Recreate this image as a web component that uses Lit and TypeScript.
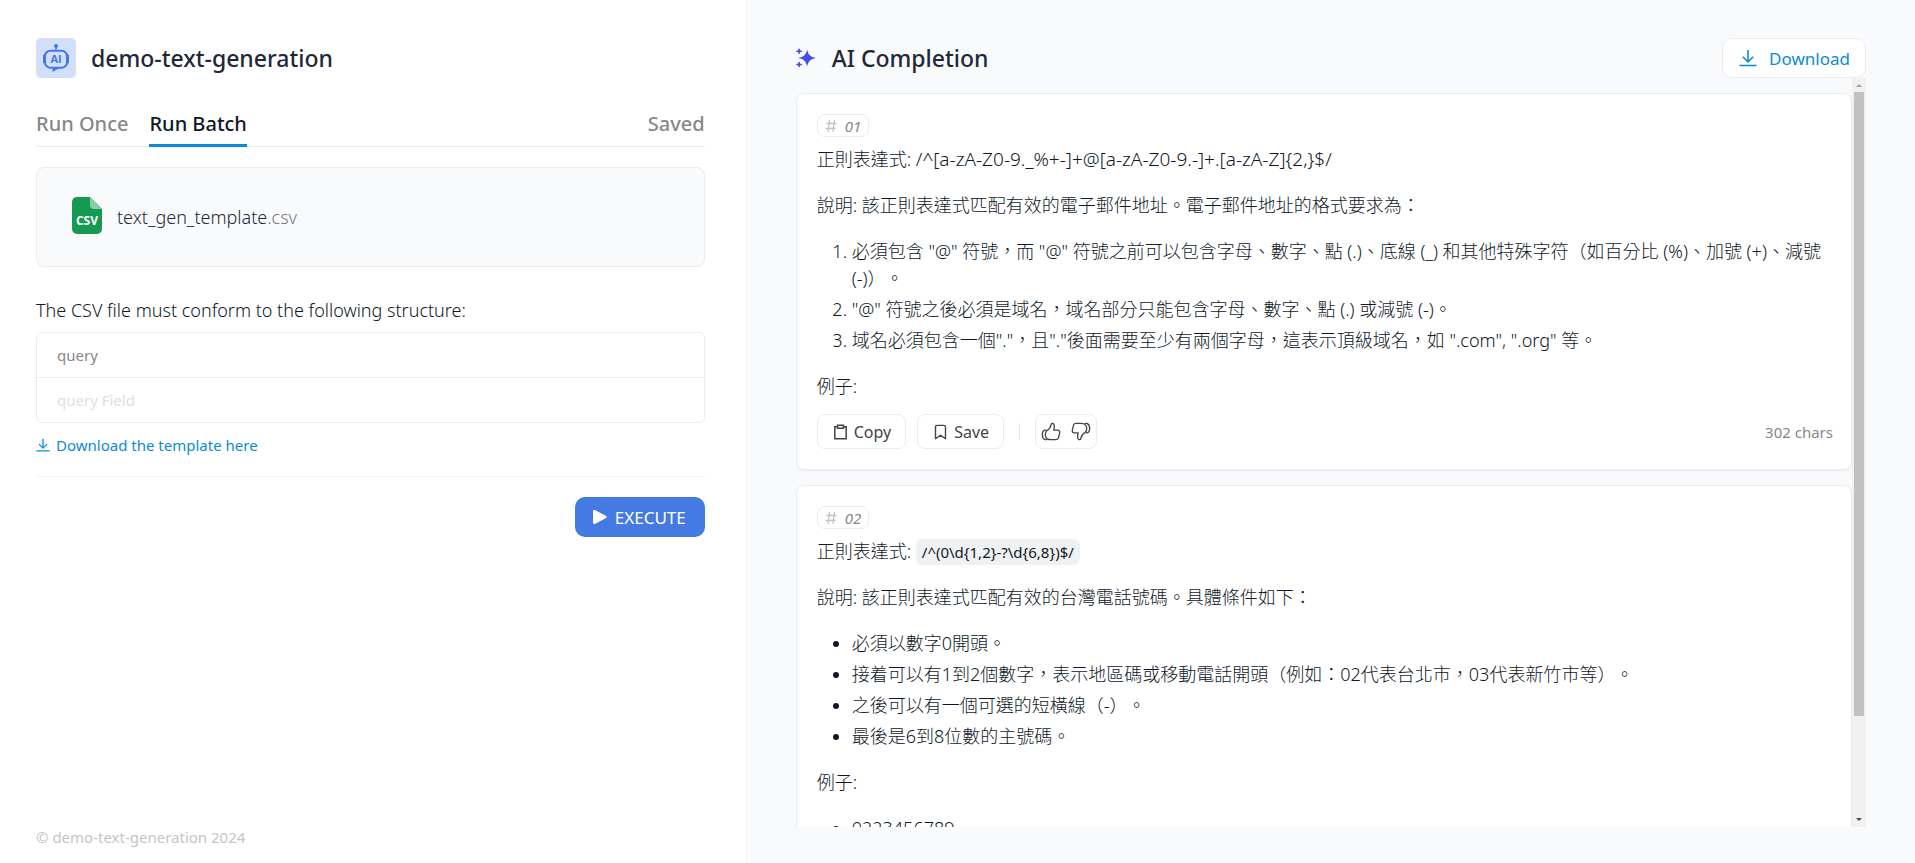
import { LitElement, html, css, svg, TemplateResult } from "lit";
import { customElement, property } from "lit/decorators.js";

const downloadIcon = html`<svg class="icon" viewBox="0 0 18 18" fill="none" stroke="currentColor" stroke-width="1.6" stroke-linejoin="round" aria-hidden="true"><path d="M9 1v11.500M3.800 7.800 9 13l5.200-5.200M.5 16.500h17"/></svg>`;

const thumb = svg`<path d="M5.300 14.500c.8.300 1.600.4 2.500.4h4.300c1.200 0 1.900-.4 2.200-1.500l1-4.300c.3-1.300-.4-2.200-1.700-2.200h-3.300c.4-1.200.6-2.500.5-3.700C10.700 1.900 10 1.100 9.100 1.100c-.6 0-.9.400-1 1.100C7.700 4.500 6.300 6.300 4.400 7.400c-1 1-1.300 2.200-1.200 3.500.1 1.500.8 2.800 2.100 3.600zM4 6.800H2.700C1.300 7.300.6 8.900.7 10.900c.1 2 .9 3.500 2.300 4h1.600"/>`;

@customElement("result-card")
class ResultCard extends LitElement {
  @property() index = "";
  @property() chars = "";

  static styles = css`
    :host {
      display: block;
      padding: 20px 18px 20px 20px;
      background: #fff;
      border: 1px solid #eaecf0;
      border-radius: 8px;
      box-shadow: 0 1px 2px rgba(16, 24, 40, 0.06);
    }
    .badge {
      display: flex;
      align-items: center;
      gap: 8px;
      box-sizing: border-box;
      width: fit-content;
      height: 23px;
      padding: 0 7px;
      border: 1px solid #eaecf0;
      border-radius: 8px;
      color: #888;
      font-size: 15px;
      font-style: italic;
      line-height: 20px;
    }
    .badge svg { width: 12px; height: 14px; color: #c4c4c4; }
    .body { margin: 9px 0 14px; }
    .actions { display: flex; align-items: center; gap: 11px; }
    button {
      display: flex;
      align-items: center;
      gap: 5px;
      box-sizing: border-box;
      height: 35px;
      padding: 0 14px;
      border: 1px solid #eaecf0;
      border-radius: 8px;
      background: #fff;
      color: #444;
      font: 400 16px "Noto Sans", sans-serif;
      cursor: pointer;
    }
    button svg { width: 17px; height: 16px; }
    .divider { width: 1px; height: 17px; margin: 0 4px; background: #e5e7eb; }
    .votes {
      display: flex;
      gap: 10px;
      align-items: center;
      box-sizing: border-box;
      height: 35px;
      padding: 0 5px;
      border: 1px solid #eaecf0;
      border-radius: 8px;
    }
    .votes button { height: 24px; padding: 0; border: 0; }
    .votes svg { width: 20px; height: 19px; }
    .flip { transform: rotate(180deg); }
    .chars { margin-left: auto; color: #888; font-size: 15px; }
  `;

  render() {
    return html`
      <div class="badge">
        <svg viewBox="0 0 12 14" fill="none" stroke="currentColor" stroke-width="1.300" aria-hidden="true"><path d="M4.500 1 3 13M9.500 1 8 13M1.500 4.500h10M.5 9.500h10"/></svg>
        <span>${this.index}</span>
      </div>
      <div class="body"><slot></slot></div>
      <div class="actions">
        <button type="button">
          <svg viewBox="0 0 16 16" fill="none" stroke="currentColor" stroke-width="1.500" aria-hidden="true"><path d="M5 2.700H2.300v12h11.400v-12H11M5 1.200h6v3H5z"/></svg>
          Copy
        </button>
        <button type="button">
          <svg viewBox="0 0 16 16" fill="none" stroke="currentColor" stroke-width="1.400" stroke-linejoin="round" aria-hidden="true"><path d="M3 14.700V3c0-1 .6-1.600 1.600-1.600h6.800c1 0 1.600.6 1.600 1.600v11.700L8 11.200z"/></svg>
          Save
        </button>
        <span class="divider"></span>
        <div class="votes">
          <button type="button" aria-label="Like"><svg viewBox="0 0 16 16" fill="none" stroke="currentColor" stroke-width="1.100" stroke-linejoin="round">${thumb}</svg></button>
          <button type="button" aria-label="Dislike"><svg class="flip" viewBox="0 0 16 16" fill="none" stroke="currentColor" stroke-width="1.100" stroke-linejoin="round">${thumb}</svg></button>
        </div>
        <span class="chars">${this.chars} chars</span>
      </div>
    `;
  }
}

@customElement("app-root")
class AppRoot extends LitElement {
  static styles = css`
    :host {
      display: grid;
      grid-template-columns: 7fr 11fr;
      height: 100vh;
      background: #f9fafc;
      color: #1d2939;
      font-family: "Noto Sans", "Noto Sans CJK TC", sans-serif;
    }
    .side {
      display: flex;
      flex-direction: column;
      box-sizing: border-box;
      min-width: 0;
      padding: 38px 40px 15px 36px;
      background: #fff;
    }
    .brand { display: flex; align-items: center; gap: 15px; }
    .logo { width: 40px; height: 40px; border-radius: 5px; background: #d1dff9; }
    .logo text { font: 700 11px "Open Sans", sans-serif; }
    h1, h2 { margin: 0; color: #1d2939; font-size: 23px; font-weight: 500; line-height: 40px; }
    .tabs {
      display: flex;
      gap: 21px;
      margin-top: 24px;
      border-bottom: 1px solid #eaecf0;
    }
    .tab {
      height: 45px;
      margin-bottom: -1px;
      padding: 0;
      border: 0;
      border-bottom: 3px solid transparent;
      background: none;
      color: #888;
      font: 500 20px "Noto Sans", sans-serif;
      cursor: pointer;
    }
    .tab.active { border-color: #0b8ad9; color: #101828; }
    .tab.last { margin-left: auto; }
    .file {
      display: flex;
      align-items: center;
      gap: 15px;
      box-sizing: border-box;
      height: 100px;
      margin-top: 20px;
      padding: 0 35px;
      border: 1px solid #eaecf0;
      border-radius: 8px;
      background: #f9fafc;
      color: #1d2939;
      font-size: 18px;
      font-weight: 300;
    }
    .file svg { width: 30px; height: 37px; margin-bottom: 4px; }
    .file text { font: 700 12px "Open Sans", sans-serif; }
    .ext { color: #777; }
    .note { margin: 30px 0 8px; color: #101828; font-size: 18px; font-weight: 300; line-height: 27px; }
    .frame { border: 1px solid #eaecf0; border-radius: 6px; }
    table { width: 100%; border-collapse: collapse; font-size: 15px; text-align: left; }
    th, td { height: 44px; padding: 0 20px; font-weight: 400; }
    th { color: #888; }
    td { border-top: 1px solid #eaecf0; color: #dedfe1; }
    .icon { width: 18px; height: 18px; }
    .template {
      display: flex;
      align-items: center;
      gap: 6px;
      align-self: flex-start;
      margin-top: 11px;
      color: #0b8ad9;
      font-size: 15px;
      line-height: 22px;
      text-decoration: none;
    }
    .template .icon { width: 14px; height: 14px; }
    .rule { height: 1px; margin: 20px 0; background: #f4f5f7; }
    .run {
      display: flex;
      align-items: center;
      align-self: flex-end;
      gap: 8px;
      height: 40px;
      padding: 0 19px 0 18px;
      border: 0;
      border-radius: 10px;
      background: #467ae3;
      color: #fff;
      font: 400 17px "Noto Sans", sans-serif;
      cursor: pointer;
    }
    .run svg { width: 14px; height: 16px; }
    footer { margin-top: auto; color: #c4c5c8; font-size: 15px; line-height: 22px; }

    .main {
      display: flex;
      flex-direction: column;
      box-sizing: border-box;
      min-width: 0;
      height: 100vh;
      padding: 38px 49px 36px 51px;
    }
    .bar { display: flex; align-items: center; gap: 16px; }
    .spark { width: 20px; height: 20px; color: #444ce7; }
    .download {
      display: flex;
      align-items: center;
      gap: 12px;
      box-sizing: border-box;
      height: 40px;
      margin-left: auto;
      padding: 0 15px 0 16px;
      border: 1px solid #eaecf0;
      border-radius: 10px;
      background: #fff;
      color: #0b8ad9;
      font: 400 17px "Noto Sans", sans-serif;
      cursor: pointer;
    }
    .pane { display: flex; flex: 1; min-height: 0; }
    .scroll {
      flex: 1;
      min-width: 0;
      box-sizing: border-box;
      padding-top: 15px;
      overflow-y: auto;
      scrollbar-width: none;
    }
    .track {
      display: flex;
      flex-direction: column;
      width: 14px;
      background: #f1f1f1;
    }
    .track svg { flex: none; width: 14px; height: 14px; }
    .grip { flex: 865; margin: 0 2px; background: #c1c1c1; }
    .rest { flex: 135; }
    result-card + result-card { margin-top: 15px; }

    .md {
      color: #101828;
      font-family: "Noto Sans", "Noto Sans CJK TC", sans-serif;
      font-size: 18px;
      font-weight: 300;
      line-height: 27px;
      text-spacing-trim: space-all;
    }
    .md p, .md ol, .md ul { margin: 0 0 19px; }
    .md > :last-child { margin-bottom: 0; }
    .md ol, .md ul { padding-left: 35px; }
    .md li + li { margin-top: 4px; }
    .latin { font-size: 19px; line-height: 1; }
    code {
      padding: 3px 6px;
      border-radius: 6px;
      background: #f0f1f3;
      font: 400 15px "Noto Sans", sans-serif;
      line-height: 1;
    }
  `;

  private first(): TemplateResult {
    return html`<div class="md" lang="zh-Hant">
      <p>正則表達式: <span class="latin">/^[a-zA-Z0-9._%+-]+@[a-zA-Z0-9.-]+.[a-zA-Z]{2,}$/</span></p>
      <p>說明: 該正則表達式匹配有效的電子郵件地址。電子郵件地址的格式要求為：</p>
      <ol>
        <li>必須包含 "@" 符號，而 "@" 符號之前可以包含字母、數字、點 (.)、底線 (_) 和其他特殊字符（如百分比 (%)、加號 (+)、減號 (-)）。</li>
        <li>"@" 符號之後必須是域名，域名部分只能包含字母、數字、點 (.) 或減號 (-)。</li>
        <li>域名必須包含一個"."，且"."後面需要至少有兩個字母，這表示頂級域名，如 ".com", ".org" 等。</li>
      </ol>
      <p>例子:</p>
    </div>`;
  }

  private second(): TemplateResult {
    return html`<div class="md" lang="zh-Hant">
      <p>正則表達式: <code>/^(0\\d{1,2}-?\\d{6,8})$/</code></p>
      <p>說明: 該正則表達式匹配有效的台灣電話號碼。具體條件如下：</p>
      <ul>
        <li>必須以數字0開頭。</li>
        <li>接着可以有1到2個數字，表示地區碼或移動電話開頭（例如：02代表台北市，03代表新竹市等）。</li>
        <li>之後可以有一個可選的短橫線（-）。</li>
        <li>最後是6到8位數的主號碼。</li>
      </ul>
      <p>例子:</p>
      <ul><li>0223456789</li></ul>
    </div>`;
  }

  render() {
    return html`
      <section class="side">
        <div class="brand">
          <svg class="logo" viewBox="0 0 40 40" fill="none" aria-hidden="true">
            <circle cx="20" cy="8" r="2" fill="#467ae3"/>
            <path d="M20 8v5" stroke="#467ae3" stroke-width="1.500"/>
            <rect x="9" y="12.700" width="22" height="17" rx="5.500" stroke="#467ae3" stroke-width="2"/>
            <path d="M8 17.500v7M32 17.500v7" stroke="#467ae3" stroke-width="2" stroke-linecap="round"/>
            <path d="M16.500 29.500h8l-8 4.500z" fill="#467ae3"/>
            <text x="20" y="25" text-anchor="middle" fill="#467ae3">AI</text>
          </svg>
          <h1>demo-text-generation</h1>
        </div>
        <nav class="tabs">
          <button class="tab" type="button">Run Once</button>
          <button class="tab active" type="button">Run Batch</button>
          <button class="tab last" type="button">Saved</button>
        </nav>
        <div class="file">
          <svg viewBox="0 0 30 37" aria-hidden="true">
            <path d="M5 0h13l12 12v20a5 5 0 0 1-5 5H5a5 5 0 0 1-5-5V5a5 5 0 0 1 5-5z" fill="#169951"/>
            <path d="M18 0l12 12h-8a4 4 0 0 1-4-4z" fill="#8bcca8"/>
            <text x="15" y="28" text-anchor="middle" fill="#fff">CSV</text>
          </svg>
          <span>text_gen_template<span class="ext">.csv</span></span>
        </div>
        <p class="note">The CSV file must conform to the following structure:</p>
        <div class="frame">
          <table>
            <thead><tr><th scope="col">query</th></tr></thead>
            <tbody><tr><td>query Field</td></tr></tbody>
          </table>
        </div>
        <a class="template" href="#template">${downloadIcon}<span>Download the template here</span></a>
        <div class="rule"></div>
        <button class="run" type="button">
          <svg viewBox="0 0 14 16" fill="currentColor" aria-hidden="true"><path d="M0 2.200C0 1.200 1 .6 1.900 1.100l11.200 5.900c.9.500.9 1.500 0 2L1.900 14.900C1 15.400 0 14.800 0 13.800z"/></svg>
          EXECUTE
        </button>
        <footer>© demo-text-generation 2024</footer>
      </section>
      <section class="main">
        <header class="bar">
          <svg class="spark" viewBox="0 0 18 20" fill="none" preserveAspectRatio="none" aria-hidden="true">
            <path d="M10 1.500c.9 5.100 3 7.500 8 8.500-5 1-7.100 3.400-8 8.500-.9-5.100-3-7.500-8-8.500 5-1 7.100-3.400 8-8.500z" fill="currentColor"/>
            <path d="M2.800.8v5M.3 3.300h5M2.800 14v5M.3 16.500h5" stroke="currentColor" stroke-width="1.500"/>
          </svg>
          <h2>AI Completion</h2>
          <button class="download" type="button">${downloadIcon}Download</button>
        </header>
        <div class="pane">
          <div class="scroll">
            <result-card index="01" chars="302">${this.first()}</result-card>
            <result-card index="02" chars="214">${this.second()}</result-card>
          </div>
          <div class="track" aria-hidden="true">
            <svg viewBox="0 0 14 14"><path d="M4 9l3-3 3 3z" fill="#a3a3a3"/></svg>
            <div class="grip"></div>
            <div class="rest"></div>
            <svg viewBox="0 0 14 14"><path d="M4 5l3 3 3-3z" fill="#505050"/></svg>
          </div>
        </div>
      </section>
    `;
  }
}
